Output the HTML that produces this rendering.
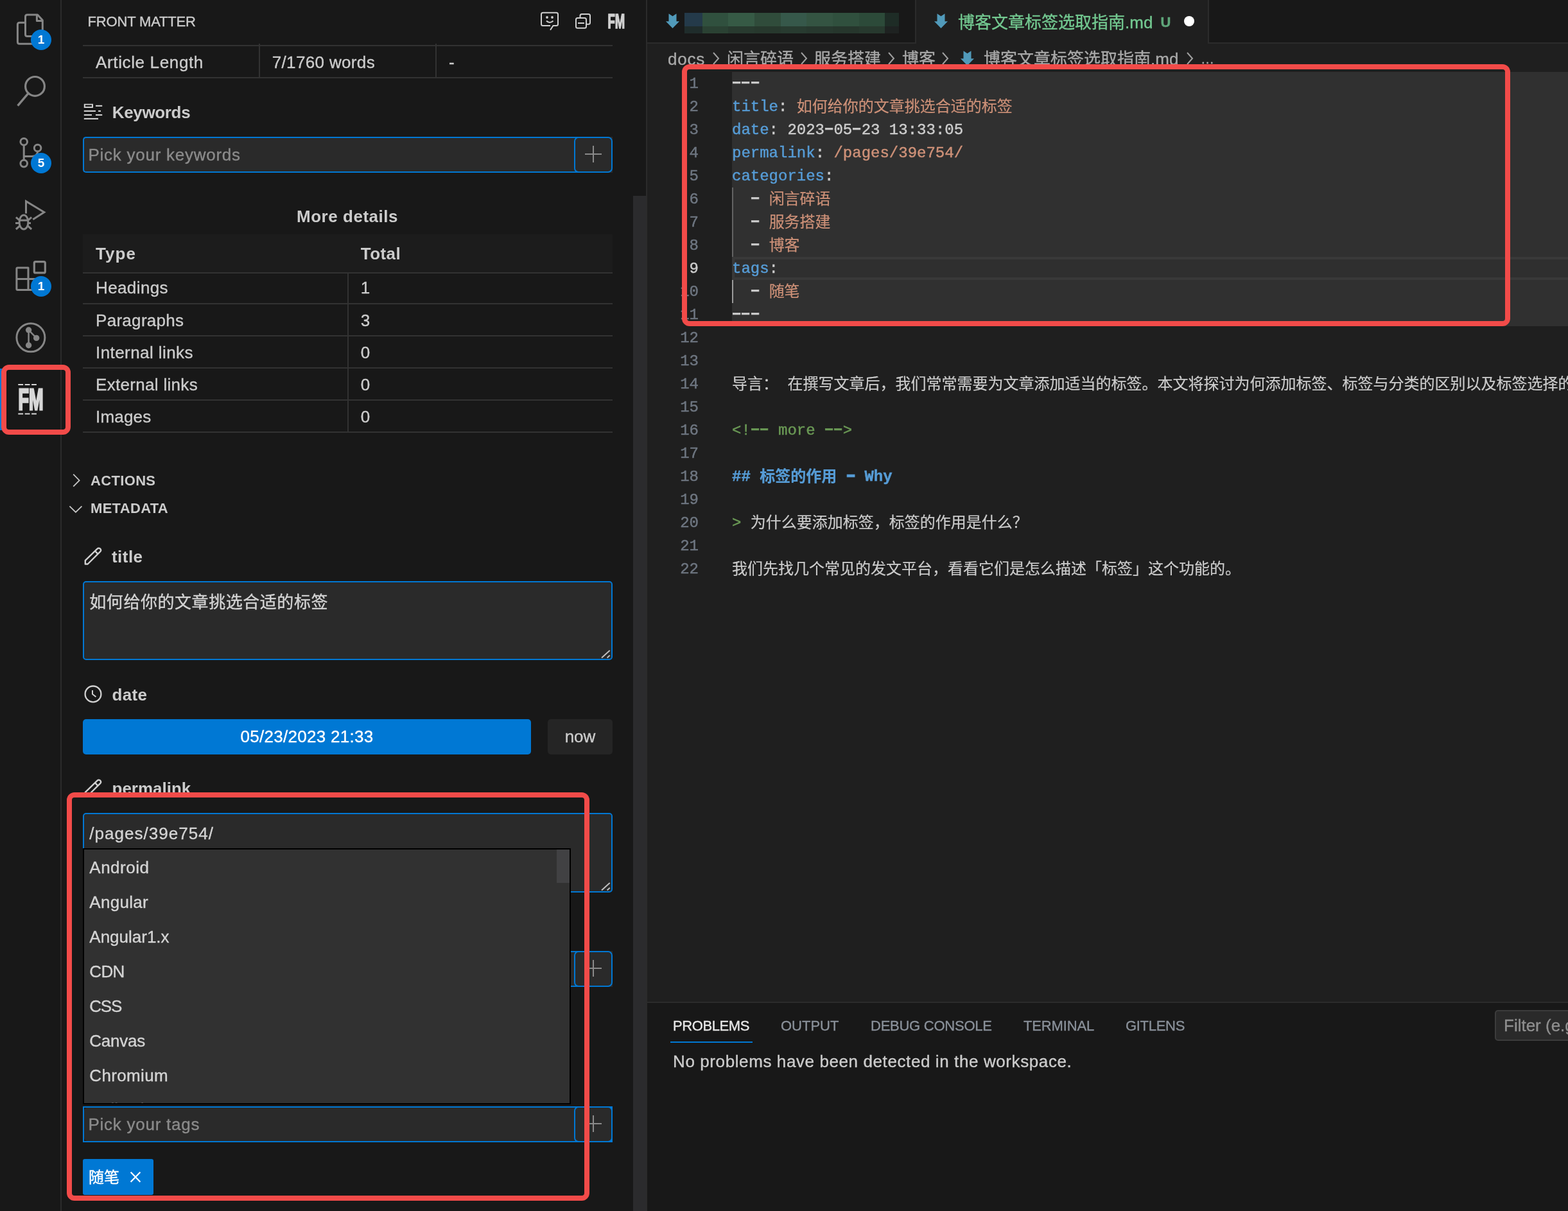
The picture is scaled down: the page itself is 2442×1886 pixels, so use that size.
<!DOCTYPE html>
<html lang="zh-CN">
<head>
<meta charset="utf-8">
<title>Front Matter - VS Code</title>
<style>
*{box-sizing:border-box;margin:0;padding:0}
html,body{width:2442px;height:1886px;overflow:hidden;background:#1f1f1f}
body{will-change:transform;position:relative;font-family:"Liberation Sans","Noto Sans CJK SC",sans-serif;color:#cccccc;font-size:26px}
.abs{position:absolute}
.t{position:absolute;white-space:nowrap;line-height:40px;height:40px;-webkit-text-stroke:0.35px}
.b{font-weight:bold}
/* ---------- activity bar ---------- */
#act{left:0;top:0;width:96px;height:1886px;background:#181818;border-right:2px solid #2b2b2b}
#act svg{position:absolute;left:0;top:0}
.badge{position:absolute;width:32px;height:32px;border-radius:16px;background:#0078d4;color:#fff;font-weight:bold;font-size:19px;line-height:32px;text-align:center}
/* ---------- sidebar ---------- */
#side{left:96px;top:0;width:912px;height:1886px;background:#181818;border-right:2px solid #2b2b2b;overflow:hidden}
.hl{position:absolute;background:#2e2e2e;height:2px}
.vl{position:absolute;background:#2e2e2e;width:2px}
.inp{position:absolute;background:#2a2a2a;border:2px solid #0078d4;border-radius:5px}
.plus{position:absolute;border:2px solid #0078d4;border-radius:7px;background:#2a2a2a}
.ph{color:#8b8b8b}
/* ---------- editor ---------- */
#ed{left:1008px;top:0;width:1434px;height:1886px;background:#1f1f1f;overflow:hidden}
.code{font-family:"Liberation Mono","Noto Sans CJK SC",monospace;font-size:24px}
.ln{position:absolute;left:0;width:80px;text-align:right;color:#6e7681;height:36px;line-height:36px;font-family:"Liberation Mono",monospace;font-size:24px;white-space:nowrap}
.cl{position:absolute;left:132px;height:36px;line-height:36px;white-space:pre;font-family:"Liberation Mono","Noto Sans CJK SC",monospace;font-size:24px;color:#cccccc}
.cl,.ln{-webkit-text-stroke:0.45px}
.z{position:relative;top:1px;-webkit-text-stroke:0.2px}
.h{display:inline-block;transform:scale(1.75,1.35);position:relative;top:-1px}
.k{color:#569cd6}.s{color:#ce9178}.c{color:#6a9955}
.redbox{position:absolute;border:8px solid #f24b49;border-radius:12px}
</style>
</head>
<body>

<!-- ================= ACTIVITY BAR ================= -->
<div id="act" class="abs">
<svg width="96" height="700" viewBox="0 0 96 700" fill="none" stroke="#868686" stroke-width="3" stroke-linejoin="round" stroke-linecap="butt">
<!-- files -->
<path d="M42.5 23.1 H58.5 L66.3 31.5 V53.4 Q66.3 56.4 63.3 56.4 H42.5 Q39.5 56.4 39.5 53.4 V26.1 Q39.5 23.1 42.5 23.1 Z"/>
<path d="M57.4 23.1 V32.5 H66.3"/>
<path d="M39.5 35.2 H30.4 Q27.4 35.2 27.4 38.2 V65.3 Q27.4 68.3 30.4 68.3 H52 V56.4"/>
<!-- search -->
<circle cx="54.5" cy="134.4" r="14.9" stroke-width="3.2"/>
<path d="M44.2 145.2 L27.6 164.6" stroke-width="3.4"/>
<!-- source control -->
<circle cx="37.2" cy="220.8" r="5.3"/>
<circle cx="58.6" cy="230.5" r="5.3"/>
<circle cx="37.2" cy="254.6" r="5.3"/>
<path d="M37.2 226.1 V249.3"/>
<path d="M58.6 235.8 Q58.6 243.4 50 243.4 H37.2"/>
<!-- debug -->
<path d="M40.5 332.5 V313.5 L68.8 330.5 L51.3 341.7" stroke-linejoin="miter"/>
<ellipse cx="37" cy="346" rx="6.9" ry="10.9"/>
<path d="M30.5 343.1 H43.5"/>
<path d="M24 347.6 H30.2 M43.8 347.6 H48 M24.9 338.3 L31 343.6 M49.1 338.3 L43 343.6 M24.9 357 L31.5 351.2 M49.1 357 L42.5 351.2"/>
<!-- extensions -->
<path d="M27.4 416.9 H44 V451.5 H27.4 Q25.9 451.5 25.9 450 V418.4 Q25.9 416.9 27.4 416.9 Z"/>
<path d="M25.9 434.5 H61.5 V451.5 H44"/>
<rect x="53.3" y="407.7" width="17" height="17.2" rx="2" stroke-width="3.2"/>
<!-- gitlens -->
<circle cx="47.9" cy="525.8" r="22"/>
<path d="M44.6 514 V537.7 M44.6 514 L56.7 526.4" stroke-width="2.5"/>
<circle cx="44.6" cy="514" r="4.7" fill="#868686" stroke="none"/>
<circle cx="56.7" cy="526.4" r="4.7" fill="#868686" stroke="none"/>
<circle cx="44.6" cy="537.7" r="4.7" fill="#868686" stroke="none"/>
<!-- FM logo -->
<g stroke="#d7d7d7" stroke-width="2.2" stroke-dasharray="7.8 2.6">
<path d="M28.3 599 H58"/><path d="M28.3 644.5 H58"/>
</g>
<text x="28.6" y="637.9" font-family="Liberation Sans, sans-serif" font-weight="bold" font-size="46.6" fill="#d7d7d7" stroke="#d7d7d7" stroke-width="3" stroke-dasharray="none" stroke-linejoin="miter" textLength="39" lengthAdjust="spacingAndGlyphs">FM</text>
</svg>
<div class="abs" style="left:0;top:574px;width:4px;height:96px;background:#0078d4"></div>
<div class="badge" style="left:48px;top:46px">1</div>
<div class="badge" style="left:48px;top:238px">5</div>
<div class="badge" style="left:48px;top:430px">1</div>
</div>

<!-- ================= SIDEBAR ================= -->
<div id="side" class="abs">
<div class="t" style="left:40.6px;top:13.9px;font-size:22px;color:#cccccc;letter-spacing:-0.18px">FRONT MATTER</div>
<svg class="abs" style="left:724px;top:0" width="190" height="70" viewBox="820 0 190 70" fill="none" stroke="#d0d0d0" stroke-width="2" stroke-linejoin="round">
<path d="M857 40 H845.5 Q843 40 843 37.5 V22.2 Q843 19.7 845.5 19.7 H866.5 Q869 19.7 869 22.2 V37.5 Q869 40 866.5 40 H861.5 L857 46.8" stroke-linejoin="miter"/>
<circle cx="852" cy="27" r="1.9" fill="#d0d0d0" stroke="none"/><circle cx="860" cy="27" r="1.9" fill="#d0d0d0" stroke="none"/>
<path d="M851 32.5 Q856 37.5 861.5 32.5"/>
<path d="M903.5 27 V24.4 Q903.5 21.9 906 21.9 H916.5 Q919 21.9 919 24.4 V35.2 Q919 37.7 916.5 37.7 H914"/>
<rect x="897" y="28" width="16" height="15.8" rx="2.5"/>
<path d="M900 36 H910"/>
<text x="946.4" y="44.2" font-family="Liberation Sans, sans-serif" font-weight="bold" font-size="31.3" fill="#d0d0d0" stroke="#d0d0d0" stroke-width="1.6" stroke-linejoin="miter" textLength="26.8" lengthAdjust="spacingAndGlyphs">FM</text>
</svg>
<div class="abs" style="left:33px;top:70px;width:825px;height:2px;background:#323232"></div>
<div class="abs" style="left:33px;top:120px;width:825px;height:2px;background:#323232"></div>
<div class="abs" style="left:307px;top:68px;width:2px;height:54px;background:#323232"></div>
<div class="abs" style="left:582px;top:68px;width:2px;height:54px;background:#323232"></div>
<div class="t" style="left:53.0px;top:77.0px;font-size:26px;letter-spacing:0.64px">Article Length</div>
<div class="t" style="left:327.7px;top:77.0px;font-size:26px;letter-spacing:0.35px">7/1760 words</div>
<div class="t" style="left:603.0px;top:77.0px;font-size:26px">-</div>
<svg class="abs" style="left:32px;top:158px" width="34" height="32" viewBox="128 158 34 32" fill="#d0d0d0">
<path fill-rule="evenodd" d="M130.8 161.7 H145 V168 H130.8 Z M132.8 163.6 V166.1 H143 V163.6 Z"/>
<rect x="149" y="163.8" width="10.2" height="2.1"/>
<rect x="130.8" y="171.9" width="18.2" height="2.1"/><rect x="153" y="171.9" width="4" height="2.1"/>
<rect x="130.8" y="178" width="12.2" height="2.1"/><rect x="149" y="178" width="10.2" height="2.1"/>
<rect x="130.8" y="183.9" width="22.2" height="2.1"/>
</svg>
<div class="t" style="left:78.8px;top:155.0px;font-size:26px;font-weight:bold;-webkit-text-stroke:0;letter-spacing:-0.35px">Keywords</div>
<div class="abs" style="left:33px;top:213px;width:825px;height:56px;background:#2a2a2a;border-radius:5px 0 0 5px"></div>
<div class="abs" style="left:33px;top:213px;width:819px;height:56px;border:2px solid #0078d4;border-right:none;border-radius:5px 0 0 5px"></div>
<div class="abs" style="left:798px;top:213px;width:60px;height:56px;background:#2a2a2a;border:2px solid #0078d4;border-radius:7px"></div>
<div class="abs" style="left:815px;top:239.0px;width:26px;height:2.0px;background:#8a8a8a"></div>
<div class="abs" style="left:827px;top:227.0px;width:2px;height:26.0px;background:#8a8a8a"></div>
<div class="t" style="left:41.5px;top:221.0px;font-size:26px;color:#8b8b8b;letter-spacing:0.74px">Pick your keywords</div>
<div class="t" style="left:366.0px;top:317.0px;font-size:26px;font-weight:bold;-webkit-text-stroke:0;letter-spacing:0.53px">More details</div>
<div class="abs" style="left:33px;top:364.5px;width:825px;height:60.5px;background:#1c1c1c"></div>
<div class="t" style="left:53.0px;top:375.0px;font-size:26px;font-weight:bold;-webkit-text-stroke:0;letter-spacing:1.05px">Type</div>
<div class="t" style="left:465.8px;top:375.0px;font-size:26px;font-weight:bold;-webkit-text-stroke:0;letter-spacing:0.44px">Total</div>
<div class="abs" style="left:33px;top:424px;width:825px;height:2px;background:#323232"></div>
<div class="abs" style="left:33px;top:472px;width:825px;height:2px;background:#323232"></div>
<div class="abs" style="left:33px;top:522px;width:825px;height:2px;background:#323232"></div>
<div class="abs" style="left:33px;top:572px;width:825px;height:2px;background:#323232"></div>
<div class="abs" style="left:33px;top:622px;width:825px;height:2px;background:#323232"></div>
<div class="abs" style="left:33px;top:672px;width:825px;height:2px;background:#323232"></div>
<div class="abs" style="left:445px;top:424px;width:2px;height:250px;background:#323232"></div>
<div class="t" style="left:53.0px;top:428.4px;font-size:26px;letter-spacing:0.39px">Headings</div>
<div class="t" style="left:465.8px;top:428.4px;font-size:26px">1</div>
<div class="t" style="left:53.0px;top:478.6px;font-size:26px;letter-spacing:0.3px">Paragraphs</div>
<div class="t" style="left:465.8px;top:478.6px;font-size:26px">3</div>
<div class="t" style="left:53.0px;top:528.8px;font-size:26px;letter-spacing:0.43px">Internal links</div>
<div class="t" style="left:465.8px;top:528.8px;font-size:26px">0</div>
<div class="t" style="left:53.0px;top:579.0px;font-size:26px;letter-spacing:0.31px">External links</div>
<div class="t" style="left:465.8px;top:579.0px;font-size:26px">0</div>
<div class="t" style="left:53.0px;top:628.6px;font-size:26px;letter-spacing:0.18px">Images</div>
<div class="t" style="left:465.8px;top:628.6px;font-size:26px">0</div>
<svg class="abs" style="left:4px;top:730px" width="40" height="80" viewBox="100 730 40 80" fill="none" stroke="#c5c5c5" stroke-width="1.8">
<path d="M114.2 738.7 L123.6 748.2 L114.2 757.7"/><path d="M108.4 788.3 L117.9 797.7 L127.4 788.3"/></svg>
<div class="t" style="left:45.0px;top:728.7px;font-size:22px;font-weight:bold;-webkit-text-stroke:0;letter-spacing:0.34px">ACTIONS</div>
<div class="t" style="left:45.0px;top:772.2px;font-size:22px;font-weight:bold;-webkit-text-stroke:0;letter-spacing:0.31px">METADATA</div>
<svg class="abs" style="left:32px;top:848.0px" width="34" height="36" viewBox="128 848 34 36" fill="none" stroke="#d0d0d0" stroke-width="2.4" stroke-linejoin="round">
<path d="M132.8 872.9 L151.3 854.9 C152.9 853.3 155.6 853.3 156.8 855.6 C157.6 857.2 157.2 858.1 155.8 859.3 L136.6 878.5 L132.8 878.5 Z"/>
<path d="M148 858.2 L152.6 862.8"/></svg>
<div class="t" style="left:78.0px;top:847.0px;font-size:26px;font-weight:bold;-webkit-text-stroke:0;letter-spacing:0.46px">title</div>
<div class="abs" style="left:33px;top:905px;width:825px;height:123px;background:#2a2a2a;border:2px solid #0078d4;border-radius:5px"></div>
<svg class="abs" style="left:838px;top:1010px" width="18" height="16" viewBox="0 0 18 16" fill="none" stroke="#c0c0c0" stroke-width="2"><path d="M3 14.5 L15.7 3 M11.6 14.5 L15.7 10.6"/></svg>
<div class="t" style="left:43.3px;top:918.0px;font-size:26px;color:#d4d4d4;letter-spacing:0.55px">如何给你的文章挑选合适的标签</div>
<svg class="abs" style="left:32px;top:1064px" width="34" height="34" viewBox="128 1064 34 34" fill="none" stroke="#d0d0d0" stroke-width="2" stroke-linejoin="round" stroke-linecap="round"><circle cx="145" cy="1080.9" r="12.4" stroke-width="2.3"/><path d="M144 1075 V1081 L149.4 1085.3" stroke-linecap="butt"/></svg>
<div class="t" style="left:78.5px;top:1061.5px;font-size:26px;font-weight:bold;-webkit-text-stroke:0;letter-spacing:0.3px">date</div>
<div class="abs" style="left:33px;top:1120px;width:698px;height:55px;background:#0078d4;border-radius:5px"></div>
<div class="t" style="left:33px;width:698px;text-align:center;top:1126.8px;font-size:26px;color:#ffffff;letter-spacing:0.3px">05/23/2023 21:33</div>
<div class="abs" style="left:757px;top:1120px;width:101px;height:55px;background:#252525;border-radius:5px"></div>
<div class="t" style="left:757px;width:101px;text-align:center;top:1126.8px;font-size:26px;color:#cccccc">now</div>
<svg class="abs" style="left:32px;top:1209.2px" width="34" height="36" viewBox="128 848 34 36" fill="none" stroke="#d0d0d0" stroke-width="2.4" stroke-linejoin="round">
<path d="M132.8 872.9 L151.3 854.9 C152.9 853.3 155.6 853.3 156.8 855.6 C157.6 857.2 157.2 858.1 155.8 859.3 L136.6 878.5 L132.8 878.5 Z"/>
<path d="M148 858.2 L152.6 862.8"/></svg>
<div class="t" style="left:78.5px;top:1208.0px;font-size:26px;font-weight:bold;-webkit-text-stroke:0">permalink</div>
<div class="abs" style="left:16px;top:1242px;width:798px;height:20px;background:#181818"></div>
<div class="abs" style="left:33px;top:1266px;width:825px;height:124px;background:#2a2a2a;border:2px solid #0078d4;border-radius:5px"></div>
<svg class="abs" style="left:838px;top:1372px" width="18" height="16" viewBox="0 0 18 16" fill="none" stroke="#c0c0c0" stroke-width="2"><path d="M3 14.5 L15.7 3 M11.6 14.5 L15.7 10.6"/></svg>
<div class="t" style="left:43.3px;top:1278.0px;font-size:26px;color:#d4d4d4;letter-spacing:1.04px">/pages/39e754/</div>
<svg class="abs" style="left:32px;top:1424px" width="34" height="34" viewBox="0 0 34 34" fill="none" stroke="#d0d0d0" stroke-width="2"><path d="M4 8 H30 M4 17 H30 M4 26 H30"/></svg>
<div class="t" style="left:78.5px;top:1422.0px;font-size:26px;font-weight:bold;-webkit-text-stroke:0">categories</div>
<div class="abs" style="left:33px;top:1481px;width:825px;height:56px;background:#2a2a2a;border-radius:5px 0 0 5px"></div>
<div class="abs" style="left:33px;top:1481px;width:819px;height:56px;border:2px solid #0078d4;border-right:none;border-radius:5px 0 0 5px"></div>
<div class="abs" style="left:798px;top:1481px;width:60px;height:56px;background:#2a2a2a;border:2px solid #0078d4;border-radius:7px"></div>
<div class="abs" style="left:815px;top:1507.0px;width:26px;height:2.0px;background:#8a8a8a"></div>
<div class="abs" style="left:827px;top:1495.0px;width:2px;height:26.0px;background:#8a8a8a"></div>
<div class="t" style="left:41.5px;top:1489.0px;font-size:26px;color:#8b8b8b;letter-spacing:0.74px">Pick your categories</div>
<div class="t" style="left:78.5px;top:1664.0px;font-size:26px;font-weight:bold;-webkit-text-stroke:0">tags</div>
<div class="abs" style="left:33px;top:1723px;width:825px;height:56px;background:#181818;border:2px solid #0078d4"></div>
<div class="abs" style="left:35px;top:1725px;width:821px;height:52px;background:#2a2a2a;border-radius:5px"></div>
<div class="abs" style="left:798px;top:1723px;width:60px;height:56px;background:#2a2a2a;border:2px solid #0078d4;border-radius:7px"></div>
<div class="abs" style="left:815px;top:1749.0px;width:26px;height:2.0px;background:#8a8a8a"></div>
<div class="abs" style="left:827px;top:1737.0px;width:2px;height:26.0px;background:#8a8a8a"></div>
<div class="t" style="left:41.5px;top:1731.0px;font-size:26px;color:#8b8b8b;letter-spacing:0.74px">Pick your tags</div>
<div class="abs" style="left:33px;top:1321px;width:760px;height:399px;background:#313131;border:2px solid #000000;overflow:hidden"></div>
<div class="t" style="left:43.3px;top:1331.0px;font-size:26px;color:#d4d4d4;letter-spacing:0.49px">Android</div>
<div class="t" style="left:43.3px;top:1385.0px;font-size:26px;color:#d4d4d4;letter-spacing:0.31px">Angular</div>
<div class="t" style="left:43.3px;top:1439.0px;font-size:26px;color:#d4d4d4">Angular1.x</div>
<div class="t" style="left:43.3px;top:1493.0px;font-size:26px;color:#d4d4d4;letter-spacing:-0.67px">CDN</div>
<div class="t" style="left:43.3px;top:1547.0px;font-size:26px;color:#d4d4d4;letter-spacing:-1.27px">CSS</div>
<div class="t" style="left:43.3px;top:1601.0px;font-size:26px;color:#d4d4d4;letter-spacing:-0.23px">Canvas</div>
<div class="t" style="left:43.3px;top:1655.0px;font-size:26px;color:#d4d4d4;letter-spacing:0.34px">Chromium</div>
<div class="abs" style="left:35px;top:1700px;width:730px;height:18px;overflow:hidden"><div class="t" style="left:8.3px;top:7.5px;font-size:26px;color:#d4d4d4">Collection</div></div>
<div class="abs" style="left:771px;top:1323px;width:20px;height:52px;background:#414143"></div>
<div class="abs" style="left:33px;top:1805px;width:110px;height:56px;background:#0078d4;border-radius:3px"></div>
<div class="t" style="left:42.0px;top:1813.7px;font-size:24px;color:#ffffff">随笔</div>
<svg class="abs" style="left:104px;top:1822px" width="22" height="22" viewBox="200 1822 22 22" fill="none" stroke="#ffffff" stroke-width="2.2"><path d="M203.6 1825.6 L218.4 1840.8 M218.4 1825.6 L203.6 1840.8"/></svg>
<div class="abs" style="left:890px;top:305px;width:20px;height:1581px;background:#2b2b2d"></div>
</div>

<!-- ================= EDITOR ================= -->
<div id="ed" class="abs">
<div class="abs" style="left:0;top:0;width:1434px;height:68px;background:#181818;border-bottom:2px solid #2b2b2b"></div>
<div class="abs" style="left:0;top:0;width:419px;height:66px;background:#181818;border-right:2px solid #2b2b2b"></div>
<svg class="abs" style="left:29px;top:21px" width="22" height="24" viewBox="0 0 22 24"><path d="M4.5 0.3 L10.5 4.2 L16.5 0.3 L16.5 12.2 L21 12.2 L10.5 23 L0 12.2 L4.5 12.2 Z" fill="#519aba"/></svg>
<div class="abs" style="left:0;top:20px;width:418px;height:33px"><div class="abs" style="left:58px;top:0;width:28.6px;height:21px;background:#243a4a"></div><div class="abs" style="left:58px;top:20.5px;width:28.6px;height:11.7px;background:#1f2c2b"></div><div class="abs" style="left:86.3px;top:0;width:40.4px;height:21px;background:#30503e"></div><div class="abs" style="left:86.3px;top:20.5px;width:40.4px;height:11.7px;background:#2a4133"></div><div class="abs" style="left:126.4px;top:0;width:40.9px;height:21px;background:#365a45"></div><div class="abs" style="left:126.4px;top:20.5px;width:40.9px;height:11.7px;background:#283a2f"></div><div class="abs" style="left:167px;top:0;width:41.0px;height:21px;background:#304c3b"></div><div class="abs" style="left:167px;top:20.5px;width:41.0px;height:11.7px;background:#27382d"></div><div class="abs" style="left:207.7px;top:0;width:40.6px;height:21px;background:#36584a"></div><div class="abs" style="left:207.7px;top:20.5px;width:40.6px;height:11.7px;background:#283b30"></div><div class="abs" style="left:248px;top:0;width:41.3px;height:21px;background:#345442"></div><div class="abs" style="left:248px;top:20.5px;width:41.3px;height:11.7px;background:#27382e"></div><div class="abs" style="left:289px;top:0;width:41.1px;height:21px;background:#30503e"></div><div class="abs" style="left:289px;top:20.5px;width:41.1px;height:11.7px;background:#26362c"></div><div class="abs" style="left:329.8px;top:0;width:40.7px;height:21px;background:#2c4a39"></div><div class="abs" style="left:329.8px;top:20.5px;width:40.7px;height:11.7px;background:#27392e"></div><div class="abs" style="left:370.2px;top:0;width:21.9px;height:21px;background:#1e2c26"></div><div class="abs" style="left:370.2px;top:20.5px;width:21.9px;height:11.7px;background:#1e2221"></div></div>
<div class="abs" style="left:419px;top:0;width:456px;height:68px;background:#1f1f1f;border-right:2px solid #2b2b2b"></div>
<svg class="abs" style="left:447px;top:21px" width="22" height="24" viewBox="0 0 22 24"><path d="M4.5 0.3 L10.5 4.2 L16.5 0.3 L16.5 12.2 L21 12.2 L10.5 23 L0 12.2 L4.5 12.2 Z" fill="#519aba"/></svg>
<div class="t" style="left:484px;top:14.5px;color:#73c991;font-size:26px">博客文章标签选取指南.md</div>
<div class="t" style="left:799.5px;top:14.5px;color:#5fa67a;font-size:22px;font-weight:bold">U</div>
<div class="abs" style="left:836px;top:25px;width:16px;height:16px;border-radius:8px;background:#ffffff"></div>
<div class="t" style="left:32px;top:71.5px;color:#a9a9a9;font-size:26px;letter-spacing:0.8px;">docs</div>
<div class="t" style="left:124px;top:71.5px;color:#a9a9a9;font-size:26px;">闲言碎语</div>
<div class="t" style="left:260px;top:71.5px;color:#a9a9a9;font-size:26px;">服务搭建</div>
<div class="t" style="left:397px;top:71.5px;color:#a9a9a9;font-size:26px;">博客</div>
<svg class="abs" style="left:100px;top:78px" width="14" height="26" viewBox="0 0 14 26"><path d="M3 4 L11 13 L3 22" fill="none" stroke="#a0a0a0" stroke-width="2"/></svg>
<svg class="abs" style="left:237px;top:78px" width="14" height="26" viewBox="0 0 14 26"><path d="M3 4 L11 13 L3 22" fill="none" stroke="#a0a0a0" stroke-width="2"/></svg>
<svg class="abs" style="left:373px;top:78px" width="14" height="26" viewBox="0 0 14 26"><path d="M3 4 L11 13 L3 22" fill="none" stroke="#a0a0a0" stroke-width="2"/></svg>
<svg class="abs" style="left:457px;top:78px" width="14" height="26" viewBox="0 0 14 26"><path d="M3 4 L11 13 L3 22" fill="none" stroke="#a0a0a0" stroke-width="2"/></svg>
<svg class="abs" style="left:838px;top:78px" width="14" height="26" viewBox="0 0 14 26"><path d="M3 4 L11 13 L3 22" fill="none" stroke="#a0a0a0" stroke-width="2"/></svg>
<svg class="abs" style="left:488px;top:79px" width="22" height="24" viewBox="0 0 22 24"><path d="M4.5 0.3 L10.5 4.2 L16.5 0.3 L16.5 12.2 L21 12.2 L10.5 23 L0 12.2 L4.5 12.2 Z" fill="#519aba"/></svg>
<div class="t" style="left:524px;top:71.5px;color:#a9a9a9;font-size:26px">博客文章标签选取指南.md</div>
<div class="t" style="left:862px;top:72px;color:#a9a9a9;font-size:21px">…</div>
<div class="abs" style="left:132px;top:112px;width:1302px;height:396px;background:#303030"></div>
<div class="abs" style="left:132px;top:400px;width:1302px;height:36px;border:4px solid #393939;border-right:none;background:#2f2f2f"></div>
<div class="abs" style="left:132px;top:292px;width:2px;height:108px;background:#636363"></div>
<div class="abs" style="left:132px;top:436px;width:2px;height:36px;background:#9a9a9a"></div>
<div class="ln" style="top:113px">1</div>
<div class="cl" style="top:113px"><span class="h">-</span><span class="h">-</span><span class="h">-</span></div>
<div class="ln" style="top:149px">2</div>
<div class="cl" style="top:149px"><span class="k">title</span>: <span class="s"><span class="z">如何给你的文章挑选合适的标签</span></span></div>
<div class="ln" style="top:185px">3</div>
<div class="cl" style="top:185px"><span class="k">date</span>: 2023<span class="h">-</span>05<span class="h">-</span>23 13:33:05</div>
<div class="ln" style="top:221px">4</div>
<div class="cl" style="top:221px"><span class="k">permalink</span>: <span class="s">/pages/39e754/</span></div>
<div class="ln" style="top:257px">5</div>
<div class="cl" style="top:257px"><span class="k">categories</span>:</div>
<div class="ln" style="top:293px">6</div>
<div class="cl" style="top:293px">  <span class="h">-</span> <span class="s"><span class="z">闲言碎语</span></span></div>
<div class="ln" style="top:329px">7</div>
<div class="cl" style="top:329px">  <span class="h">-</span> <span class="s"><span class="z">服务搭建</span></span></div>
<div class="ln" style="top:365px">8</div>
<div class="cl" style="top:365px">  <span class="h">-</span> <span class="s"><span class="z">博客</span></span></div>
<div class="ln" style="top:401px;color:#cccccc">9</div>
<div class="cl" style="top:401px"><span class="k">tags</span>:</div>
<div class="ln" style="top:437px">10</div>
<div class="cl" style="top:437px">  <span class="h">-</span> <span class="s"><span class="z">随笔</span></span></div>
<div class="ln" style="top:473px">11</div>
<div class="cl" style="top:473px"><span class="h">-</span><span class="h">-</span><span class="h">-</span></div>
<div class="ln" style="top:509px">12</div>
<div class="ln" style="top:545px">13</div>
<div class="ln" style="top:581px">14</div>
<div class="cl" style="top:581px"><span class="z">导言：</span> <span class="z">在撰写文章后，我们常常需要为文章添加适当的标签。本文将探讨为何添加标签、标签与分类的区别以及标签选择的原则和方法。</span></div>
<div class="ln" style="top:617px">15</div>
<div class="ln" style="top:653px">16</div>
<div class="cl" style="top:653px"><span class="c">&lt;!<span class="h">-</span><span class="h">-</span> more <span class="h">-</span><span class="h">-</span>&gt;</span></div>
<div class="ln" style="top:689px">17</div>
<div class="ln" style="top:725px">18</div>
<div class="cl" style="top:725px"><span class="k b">## <span class="z">标签的作用</span> <span class="h">-</span> Why</span></div>
<div class="ln" style="top:761px">19</div>
<div class="ln" style="top:797px">20</div>
<div class="cl" style="top:797px"><span class="c">&gt;</span> <span class="z">为什么要添加标签，标签的作用是什么？</span></div>
<div class="ln" style="top:833px">21</div>
<div class="ln" style="top:869px">22</div>
<div class="cl" style="top:869px"><span class="z">我们先找几个常见的发文平台，看看它们是怎么描述「标签」这个功能的。</span></div>
<div class="abs" style="left:0;top:1560px;width:1434px;height:326px;background:#181818;border-top:2px solid #2b2b2b"></div>
<div class="t" style="left:40px;top:1578px;color:#e7e7e7;font-size:22px;letter-spacing:-0.4px">PROBLEMS</div>
<div class="t" style="left:208px;top:1578px;color:#8a919a;font-size:22px;letter-spacing:0px">OUTPUT</div>
<div class="t" style="left:348px;top:1578px;color:#8a919a;font-size:22px;letter-spacing:-0.25px">DEBUG CONSOLE</div>
<div class="t" style="left:586px;top:1578px;color:#8a919a;font-size:22px;letter-spacing:-0.15px">TERMINAL</div>
<div class="t" style="left:745px;top:1578px;color:#8a919a;font-size:22px;letter-spacing:-0.3px">GITLENS</div>
<div class="abs" style="left:36px;top:1622px;width:128px;height:2px;background:#0078d4"></div>
<div class="abs" style="left:1320px;top:1573px;width:200px;height:48px;background:#2a2a2a;border:2px solid #3c3c3c;border-radius:5px"></div>
<div class="t" style="left:1334px;top:1577px;color:#8f8f8f;font-size:26px">Filter (e.g. text, **/*.ts, !**/node_modules/**)</div>
<div class="t" style="left:40px;top:1633px;color:#cccccc;font-size:26px;letter-spacing:0.6px">No problems have been detected in the workspace.</div>
</div>

<!-- ================= ANNOTATIONS ================= -->
<div class="redbox" style="left:2px;top:568px;width:108px;height:109px"></div>
<div class="redbox" style="left:1062px;top:100px;width:1290px;height:408px"></div>
<div class="redbox" style="left:104px;top:1234px;width:814px;height:636px"></div>

</body>
</html>
